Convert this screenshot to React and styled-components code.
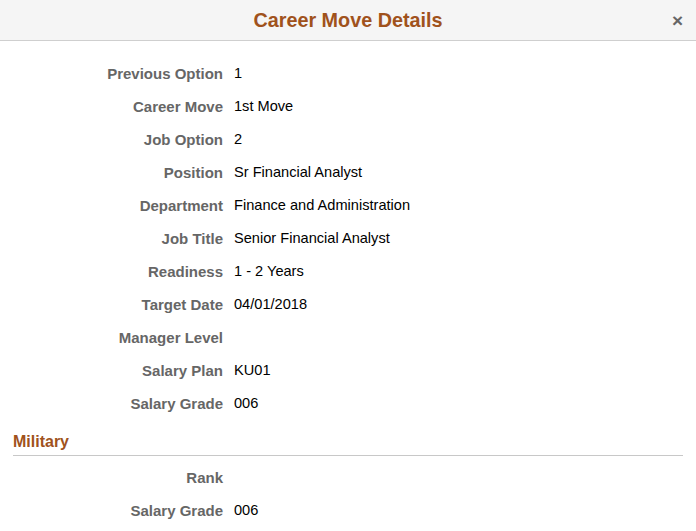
import React from "react";
import styled, { createGlobalStyle } from "styled-components";

const fields = [
  ["Previous Option", "1"],
  ["Career Move", "1st Move"],
  ["Job Option", "2"],
  ["Position", "Sr Financial Analyst"],
  ["Department", "Finance and Administration"],
  ["Job Title", "Senior Financial Analyst"],
  ["Readiness", "1 - 2 Years"],
  ["Target Date", "04/01/2018"],
  ["Manager Level", ""],
  ["Salary Plan", "KU01"],
  ["Salary Grade", "006"],
];

const military = [
  ["Rank", ""],
  ["Salary Grade", "006"],
];

const App = () => {
  return (
    <>
      <GlobalStyle />
      <Dialog>
        <Header>
          <Title>Career Move Details</Title>
          <Close aria-label="Close">×</Close>
        </Header>
        <Body>
          <Fields>
            {fields.map(([label, value]) => (
              <React.Fragment key={label}>
                <Label>{label}</Label>
                <Value>{value}</Value>
              </React.Fragment>
            ))}
          </Fields>
          <Section>
            <SectionTitle>Military</SectionTitle>
          </Section>
          <Fields $top={5}>
            {military.map(([label, value]) => (
              <React.Fragment key={label}>
                <Label>{label}</Label>
                <Value>{value}</Value>
              </React.Fragment>
            ))}
          </Fields>
        </Body>
      </Dialog>
    </>
  );
};

export default App;

// style
const GlobalStyle = createGlobalStyle`
  body {
    margin: 0;
    background: #fff;
    font-family: "Liberation Sans", Arial, sans-serif;
  }
`;
const Dialog = styled.div`
  width: 696px;
  height: 531px;
  overflow: hidden;
`;
const Header = styled.div`
  position: relative;
  height: 40px;
  display: flex;
  align-items: center;
  justify-content: center;
  background: #f5f5f5;
  border-bottom: 1px solid #cfcfcf;
`;
const Title = styled.h1`
  margin: 0;
  font-size: 19.8px;
  font-weight: bold;
  color: #a0521c;
`;
const Close = styled.span`
  position: absolute;
  right: 13px;
  top: 11px;
  font-size: 19px;
  line-height: 19px;
  color: #666;
  font-weight: bold;
`;
const Body = styled.div`
  padding-top: 16px;
`;
const Fields = styled.div`
  display: grid;
  grid-template-columns: 223px 1fr;
  grid-auto-rows: 33px;
  column-gap: 11px;
  margin-top: ${(p) => p.$top || 0}px;
  line-height: 33px;
`;
const Label = styled.div`
  text-align: right;
  font-size: 15px;
  font-weight: bold;
  color: #666;
`;
const Value = styled.div`
  font-size: 14.6px;
  color: #000;
`;
const Section = styled.div`
  margin: 12px 13px 0;
  border-bottom: 1px solid #c8c8c8;
  padding-bottom: 3px;
`;
const SectionTitle = styled.h2`
  margin: 0;
  font-size: 16px;
  line-height: 20px;
  font-weight: bold;
  color: #a0521c;
`;
